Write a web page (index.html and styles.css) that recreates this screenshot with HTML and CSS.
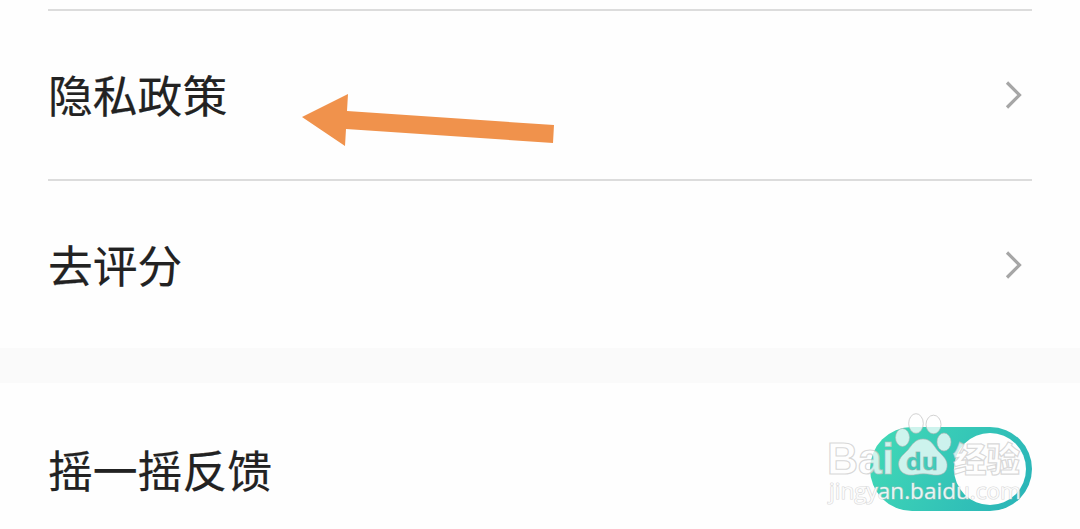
FILE: index.html
```html
<!DOCTYPE html>
<html lang="zh-CN">
<head>
  <meta charset="UTF-8">
  <title>设置</title>
  <meta name="viewport" content="width=device-width, initial-scale=1.0">
  <link rel="stylesheet" href="styles.css">
</head>
<body>
  <div class="group">
    <div class="row">
      <span class="label">隐私政策</span>
      <svg class="chevron" width="20" height="32" viewBox="0 0 20 32">
        <path d="M3 3.5 L15.5 16 L3 28.5"/>
      </svg>
    </div>
    <div class="row">
      <span class="label">去评分</span>
      <svg class="chevron" width="20" height="32" viewBox="0 0 20 32">
        <path d="M3 3.5 L15.5 16 L3 28.5"/>
      </svg>
    </div>
  </div>

  <div class="divider"></div>

  <div class="group">
    <div class="row row-switch">
      <span class="label">摇一摇反馈</span>
      <div class="switch"><div class="knob"></div></div>
    </div>
  </div>

  <svg class="arrow" width="254" height="54" viewBox="0 0 254 54">
    <path d="M1 24 L47 1 L46 18 L253 32 L252 50 L45 36 L44 53 Z"/>
  </svg>

  <svg class="watermark" width="210" height="104" viewBox="0 0 210 104">
    <text class="mark" x="6" y="63.5" font-size="44" textLength="67" lengthAdjust="spacingAndGlyphs">Bai</text>
    <g class="paw">
      <ellipse cx="81.5" cy="27.5" rx="7" ry="9"/>
      <ellipse cx="95" cy="13.5" rx="7.3" ry="9.8"/>
      <ellipse cx="112.5" cy="14.5" rx="7.5" ry="9.3"/>
      <ellipse cx="123" cy="32" rx="7" ry="9"/>
      <path d="M102 29 C94 29 91 35 87 40 C82 45 76 49 78 57 C80 65 89 66 95 64.5 C100 63.5 105 63.5 110 64.5 C117 66 125 65 126 57 C127 50 122 46 117 41 C112 35 110 29 102 29 Z"/>
    </g>
    <text class="du" x="85" y="59.5" font-size="23" textLength="32" lengthAdjust="spacingAndGlyphs">du</text>
    <text class="mark cjk" x="132" y="61.5" font-size="34" textLength="67" lengthAdjust="spacingAndGlyphs">经验</text>
    <text class="url" x="8" y="89" font-size="22" textLength="192" lengthAdjust="spacingAndGlyphs">jingyan.baidu.com</text>
  </svg>
</body>
</html>
```

FILE: styles.css
```css
body {
  margin: 0;
  height: 529px;
  position: relative;
  overflow: hidden;
  background: #fefefe;
  color: #222;
  font-family: "Noto Sans CJK SC", sans-serif;
}

.group {
  padding: 0 48px;
}

.row {
  display: flex;
  align-items: center;
  justify-content: space-between;
  box-sizing: border-box;
  height: 170px;
  border-top: 2px solid #dcdcdc;
}

.row:first-child {
  margin-top: 9px;
}

.label {
  font-size: 44.8px;
  line-height: 66px;
  padding-bottom: 2px;
  -webkit-text-stroke: 0.2px #222;
}

.chevron {
  margin-right: 8px;
}

.chevron path {
  fill: none;
  stroke: #a6a6a6;
  stroke-width: 3.2;
}

.divider {
  height: 35px;
  margin-top: -1px;
  background: #fafafa;
}

.group .row-switch {
  height: auto;
  margin-top: 0;
  padding-top: 44px;
  border-top: none;
}

.row-switch .label {
  padding-bottom: 0;
}

.switch {
  box-sizing: border-box;
  width: 162px;
  height: 84px;
  padding: 6px;
  border-radius: 42px;
  background: linear-gradient(120deg, #42dbb6, #28b2b8);
}

.knob {
  width: 72px;
  height: 72px;
  margin-left: auto;
  border-radius: 50%;
  background: #fefefe;
}

.arrow {
  position: absolute;
  left: 301px;
  top: 93px;
  fill: #f0924c;
}

.watermark {
  position: absolute;
  left: 821px;
  top: 410px;
}

.mark {
  font-family: "Liberation Sans", sans-serif;
  font-weight: bold;
  fill: rgba(255, 255, 255, 0.75);
  stroke: rgba(190, 190, 190, 0.6);
  stroke-width: 1.2;
}

.cjk {
  font-family: "Noto Sans CJK SC", sans-serif;
  font-weight: 900;
}

.paw {
  fill: rgba(255, 255, 255, 0.75);
  stroke: rgba(180, 180, 180, 0.6);
  stroke-width: 1;
}

.du {
  font-family: "Open Sans", sans-serif;
  font-weight: bold;
  fill: #3fcdba;
  stroke: rgba(140, 170, 165, 0.6);
  stroke-width: 0.8;
}

.url {
  font-family: "Open Sans", sans-serif;
  fill: rgba(255, 255, 255, 0.85);
  stroke: rgba(190, 190, 190, 0.6);
  stroke-width: 1.2;
  paint-order: stroke;
}
```
